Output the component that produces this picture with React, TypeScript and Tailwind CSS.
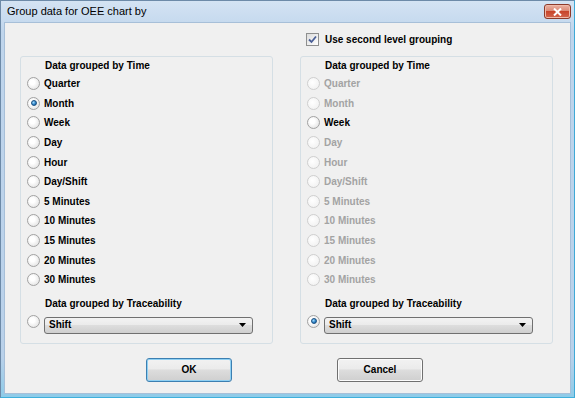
import React from "react";

const F = { fontFamily: '"Liberation Sans", Arial, sans-serif' };

function Radio({ checked = false, disabled = false }: { checked?: boolean; disabled?: boolean }) {
  return (
    <div
      className={
        "w-[13px] h-[13px] rounded-full border flex items-center justify-center shrink-0 " +
        (disabled
          ? "border-[#cfcfcf] bg-[radial-gradient(circle_at_40%_40%,#ffffff,#eeeeee)]"
          : "border-[#a2a2a2] bg-[radial-gradient(circle_at_40%_40%,#ffffff_25%,#dadada)]")
      }
    >
      {checked && (
        <div className="w-[6px] h-[6px] rounded-full border border-[#1a4f80] bg-[radial-gradient(circle_at_35%_35%,#9fdcff,#2a7fc4_60%,#10508a)]" />
      )}
    </div>
  );
}

function Combo() {
  return (
    <div className="w-[209px] h-[17px] rounded-[3px] border border-[#707070] bg-[linear-gradient(#f3f3f3,#ebebeb_45%,#dddddd_50%,#cfcfcf)] flex items-center justify-between pl-[4px] pr-[6px]">
      <span className="text-[10px] font-bold text-black leading-none">Shift</span>
      <svg width="7" height="4" viewBox="0 0 7 4">
        <path d="M0 0 H7 L3.5 4 Z" fill="#000" />
      </svg>
    </div>
  );
}

const items = [
  "Quarter",
  "Month",
  "Week",
  "Day",
  "Hour",
  "Day/Shift",
  "5 Minutes",
  "10 Minutes",
  "15 Minutes",
  "20 Minutes",
  "30 Minutes",
];

function GroupBox({ side }: { side: "left" | "right" }) {
  return (
    <div className="border border-[#d5dfe5] rounded-[3px] flex flex-col pb-[9px]">
      <div className="h-[17px] pl-[24px] flex items-center text-[10px] font-bold text-black">
        Data grouped by Time
      </div>
      {items.map((it) => {
        const checked = side === "left" && it === "Month";
        const disabled = side === "right" && it !== "Week";
        return (
          <div key={it} className="h-[19.6px] flex items-center pl-[6px] gap-[4px]">
            <Radio checked={checked} disabled={disabled} />
            <span className={"text-[10px] font-bold " + (disabled ? "text-[#a3a3a3]" : "text-black")}>{it}</span>
          </div>
        );
      })}
      <div className="mt-[7px] h-[14px] pl-[24px] flex items-center text-[10px] font-bold text-black">
        Data grouped by Traceability
      </div>
      <div className="mt-[6px] flex items-start pl-[6px] gap-[4px]">
        <div className="-mt-[2px]">
          <Radio checked={side === "right"} />
        </div>
        <Combo />
      </div>
    </div>
  );
}

function Button({ label, def = false }: { label: string; def?: boolean }) {
  return (
    <div
      className={
        "w-[86px] h-[24px] rounded-[3px] border flex items-center justify-center text-[10px] font-bold text-black bg-[linear-gradient(#f2f2f2,#ebebeb_45%,#dddddd_50%,#cfcfcf)] " +
        (def
          ? "border-[#3c7fb1] shadow-[inset_0_0_0_1px_#8fd0f3]"
          : "border-[#707070] shadow-[inset_0_0_0_1px_#fcfcfc]")
      }
    >
      {label}
    </div>
  );
}

export default function App() {
  return (
    <div
      style={F}
      className="w-[575px] h-[398px] flex flex-col border border-t-[#6d8aa8] border-l-[#6d8aa8] border-r-[#3fa9d6] border-b-[#3fb0dc] bg-[linear-gradient(#d4e3f3,#bfd5ec_8%,#b9d1ea_90%,#8ecbe8)]"
    >
      <div className="h-[21px] shrink-0 flex items-center justify-between pl-[6px] pr-[3px]">
        <span className="text-[11px] text-black leading-none">Group data for OEE chart by</span>
        <div className="w-[27px] h-[15px] rounded-[3px] border border-[#8d3a2a] bg-[linear-gradient(#eab1a2,#dc8a76_45%,#c8452b_50%,#d3664e)] flex items-center justify-center shadow-[inset_0_0_0_1px_#f0b9a8]">
          <svg width="9" height="8" viewBox="0 0 9 8">
            <path d="M1 0.5 L8 7.5 M8 0.5 L1 7.5" stroke="#ffffff" strokeWidth="2" />
          </svg>
        </div>
      </div>
      <div className="flex-1 mx-[3px] mb-[3px] bg-[#f0f0f0] border border-[#a7bfd8] flex flex-col">
        <div className="h-[33px] shrink-0 grid grid-cols-[253px_253px] gap-x-[27px] pl-[15px]">
          <div />
          <div className="flex items-center pl-[6px] gap-[6px]">
            <div className="w-[13px] h-[13px] border border-[#8e8f8f] bg-[linear-gradient(135deg,#dcdcdc,#ffffff)] flex items-center justify-center">
              <svg width="9" height="9" viewBox="0 0 9 9">
                <path d="M1 4.5 L3.5 7 L8 1.5" stroke="#4a5f97" strokeWidth="1.8" fill="none" />
              </svg>
            </div>
            <span className="text-[10px] font-bold text-black">Use second level grouping</span>
          </div>
        </div>
        <div className="grid grid-cols-[253px_253px] gap-x-[27px] pl-[15px]">
          <GroupBox side="left" />
          <GroupBox side="right" />
        </div>
        <div className="mt-[14px] flex pl-[141px] gap-[105px]">
          <Button label="OK" def />
          <Button label="Cancel" />
        </div>
      </div>
    </div>
  );
}
